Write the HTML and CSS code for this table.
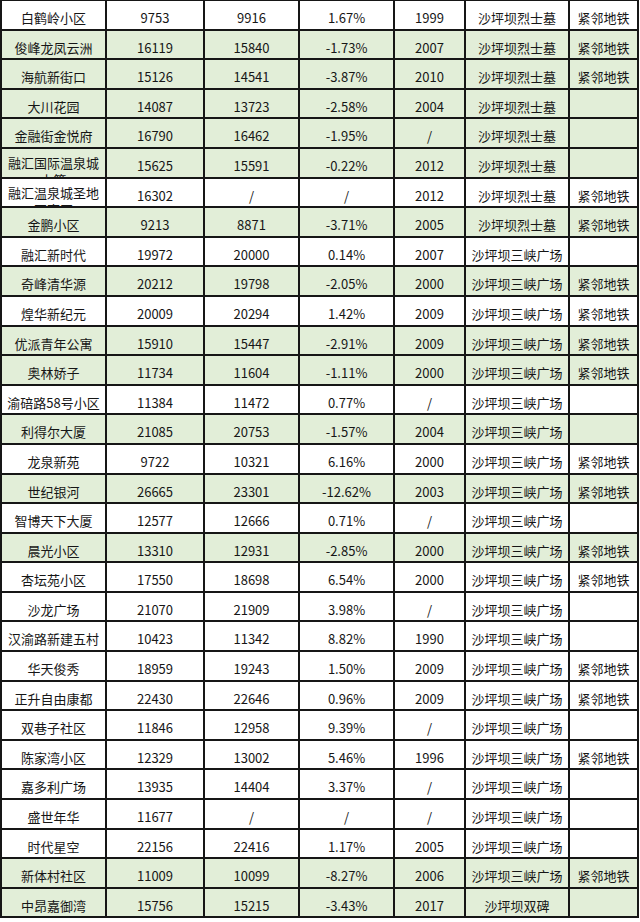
FILE: index.html
```html
<!DOCTYPE html>
<html lang="zh-CN">
<head>
<meta charset="utf-8">
<title>沙坪坝小区房价</title>
<link rel="stylesheet" href="styles.css">
</head>
<body>
<div class="sheet">
  <div class="row"><div class="c">白鹤岭小区</div><div class="c">9753</div><div class="c">9916</div><div class="c">1.67%</div><div class="c">1999</div><div class="c">沙坪坝烈士墓</div><div class="c">紧邻地铁</div></div>
  <div class="row g"><div class="c">俊峰龙凤云洲</div><div class="c">16119</div><div class="c">15840</div><div class="c">-1.73%</div><div class="c">2007</div><div class="c">沙坪坝烈士墓</div><div class="c">紧邻地铁</div></div>
  <div class="row g"><div class="c">海航新街口</div><div class="c">15126</div><div class="c">14541</div><div class="c">-3.87%</div><div class="c">2010</div><div class="c">沙坪坝烈士墓</div><div class="c">紧邻地铁</div></div>
  <div class="row g"><div class="c">大川花园</div><div class="c">14087</div><div class="c">13723</div><div class="c">-2.58%</div><div class="c">2004</div><div class="c">沙坪坝烈士墓</div><div class="c"></div></div>
  <div class="row g"><div class="c">金融街金悦府</div><div class="c">16790</div><div class="c">16462</div><div class="c">-1.95%</div><div class="c">/</div><div class="c">沙坪坝烈士墓</div><div class="c"></div></div>
  <div class="row g"><div class="c w">融汇国际温泉城上篇</div><div class="c">15625</div><div class="c">15591</div><div class="c">-0.22%</div><div class="c">2012</div><div class="c">沙坪坝烈士墓</div><div class="c"></div></div>
  <div class="row"><div class="c w">融汇温泉城圣地亚南区</div><div class="c">16302</div><div class="c">/</div><div class="c">/</div><div class="c">2012</div><div class="c">沙坪坝烈士墓</div><div class="c">紧邻地铁</div></div>
  <div class="row g"><div class="c">金鹏小区</div><div class="c">9213</div><div class="c">8871</div><div class="c">-3.71%</div><div class="c">2005</div><div class="c">沙坪坝烈士墓</div><div class="c">紧邻地铁</div></div>
  <div class="row"><div class="c">融汇新时代</div><div class="c">19972</div><div class="c">20000</div><div class="c">0.14%</div><div class="c">2007</div><div class="c">沙坪坝三峡广场</div><div class="c"></div></div>
  <div class="row g"><div class="c">奇峰清华源</div><div class="c">20212</div><div class="c">19798</div><div class="c">-2.05%</div><div class="c">2000</div><div class="c">沙坪坝三峡广场</div><div class="c">紧邻地铁</div></div>
  <div class="row"><div class="c">煌华新纪元</div><div class="c">20009</div><div class="c">20294</div><div class="c">1.42%</div><div class="c">2009</div><div class="c">沙坪坝三峡广场</div><div class="c">紧邻地铁</div></div>
  <div class="row g"><div class="c">优派青年公寓</div><div class="c">15910</div><div class="c">15447</div><div class="c">-2.91%</div><div class="c">2009</div><div class="c">沙坪坝三峡广场</div><div class="c">紧邻地铁</div></div>
  <div class="row g"><div class="c">奥林娇子</div><div class="c">11734</div><div class="c">11604</div><div class="c">-1.11%</div><div class="c">2000</div><div class="c">沙坪坝三峡广场</div><div class="c">紧邻地铁</div></div>
  <div class="row"><div class="c">渝碚路58号小区</div><div class="c">11384</div><div class="c">11472</div><div class="c">0.77%</div><div class="c">/</div><div class="c">沙坪坝三峡广场</div><div class="c"></div></div>
  <div class="row g"><div class="c">利得尔大厦</div><div class="c">21085</div><div class="c">20753</div><div class="c">-1.57%</div><div class="c">2004</div><div class="c">沙坪坝三峡广场</div><div class="c"></div></div>
  <div class="row"><div class="c">龙泉新苑</div><div class="c">9722</div><div class="c">10321</div><div class="c">6.16%</div><div class="c">2000</div><div class="c">沙坪坝三峡广场</div><div class="c">紧邻地铁</div></div>
  <div class="row g"><div class="c">世纪银河</div><div class="c">26665</div><div class="c">23301</div><div class="c">-12.62%</div><div class="c">2003</div><div class="c">沙坪坝三峡广场</div><div class="c">紧邻地铁</div></div>
  <div class="row"><div class="c">智博天下大厦</div><div class="c">12577</div><div class="c">12666</div><div class="c">0.71%</div><div class="c">/</div><div class="c">沙坪坝三峡广场</div><div class="c"></div></div>
  <div class="row g"><div class="c">晨光小区</div><div class="c">13310</div><div class="c">12931</div><div class="c">-2.85%</div><div class="c">2000</div><div class="c">沙坪坝三峡广场</div><div class="c">紧邻地铁</div></div>
  <div class="row"><div class="c">杏坛苑小区</div><div class="c">17550</div><div class="c">18698</div><div class="c">6.54%</div><div class="c">2000</div><div class="c">沙坪坝三峡广场</div><div class="c">紧邻地铁</div></div>
  <div class="row"><div class="c">沙龙广场</div><div class="c">21070</div><div class="c">21909</div><div class="c">3.98%</div><div class="c">/</div><div class="c">沙坪坝三峡广场</div><div class="c"></div></div>
  <div class="row"><div class="c">汉渝路新建五村</div><div class="c">10423</div><div class="c">11342</div><div class="c">8.82%</div><div class="c">1990</div><div class="c">沙坪坝三峡广场</div><div class="c"></div></div>
  <div class="row"><div class="c">华天俊秀</div><div class="c">18959</div><div class="c">19243</div><div class="c">1.50%</div><div class="c">2009</div><div class="c">沙坪坝三峡广场</div><div class="c">紧邻地铁</div></div>
  <div class="row"><div class="c">正升自由康都</div><div class="c">22430</div><div class="c">22646</div><div class="c">0.96%</div><div class="c">2009</div><div class="c">沙坪坝三峡广场</div><div class="c">紧邻地铁</div></div>
  <div class="row"><div class="c">双巷子社区</div><div class="c">11846</div><div class="c">12958</div><div class="c">9.39%</div><div class="c">/</div><div class="c">沙坪坝三峡广场</div><div class="c"></div></div>
  <div class="row"><div class="c">陈家湾小区</div><div class="c">12329</div><div class="c">13002</div><div class="c">5.46%</div><div class="c">1996</div><div class="c">沙坪坝三峡广场</div><div class="c">紧邻地铁</div></div>
  <div class="row"><div class="c">嘉多利广场</div><div class="c">13935</div><div class="c">14404</div><div class="c">3.37%</div><div class="c">/</div><div class="c">沙坪坝三峡广场</div><div class="c"></div></div>
  <div class="row"><div class="c">盛世年华</div><div class="c">11677</div><div class="c">/</div><div class="c">/</div><div class="c">/</div><div class="c">沙坪坝三峡广场</div><div class="c"></div></div>
  <div class="row"><div class="c">时代星空</div><div class="c">22156</div><div class="c">22416</div><div class="c">1.17%</div><div class="c">2005</div><div class="c">沙坪坝三峡广场</div><div class="c"></div></div>
  <div class="row g"><div class="c">新体村社区</div><div class="c">11009</div><div class="c">10099</div><div class="c">-8.27%</div><div class="c">2006</div><div class="c">沙坪坝三峡广场</div><div class="c">紧邻地铁</div></div>
  <div class="row g"><div class="c">中昂嘉御湾</div><div class="c">15756</div><div class="c">15215</div><div class="c">-3.43%</div><div class="c">2017</div><div class="c">沙坪坝双碑</div><div class="c"></div></div>
</div>
</body>
</html>
```
FILE: styles.css
```css
html, body {
  margin: 0;
  padding: 0;
  background: #ffffff;
}

body {
  font-family: "Noto Sans CJK SC", "Noto Sans", sans-serif;
  font-size: 13px;
  color: #161616;
}

.sheet {
  width: 639px;
  margin-top: -1px;
  display: grid;
  grid-template-columns: 103px 96px 93px 93px 69px 102px 67px;
  grid-auto-rows: 27.6px;
  gap: 2px;
  padding: 2px;
  box-sizing: border-box;
  background: #161616;
}

.row {
  display: contents;
}

.c {
  background: #ffffff;
  overflow: hidden;
  text-align: center;
  line-height: 17px;
  padding: 8px 2px 0;
  box-sizing: border-box;
  white-space: normal;
  word-break: break-all;
}

.c.w {
  padding-top: 5px;
}

.g .c {
  background: #e2eed8;
}
```
